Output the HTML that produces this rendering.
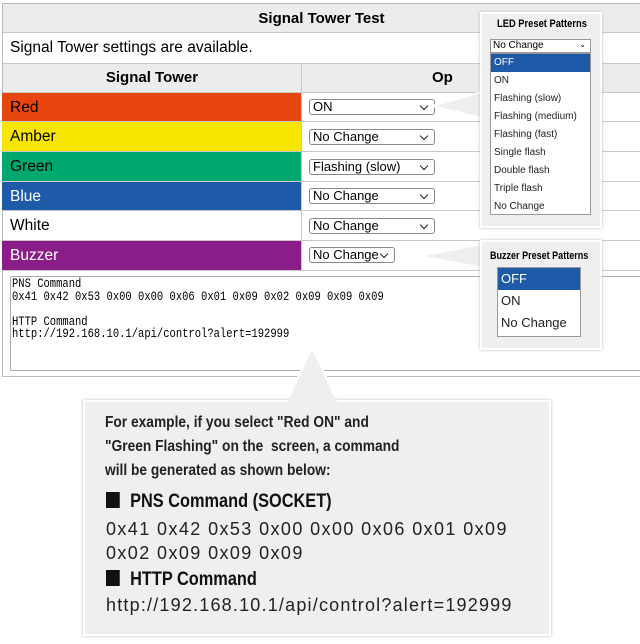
<!DOCTYPE html>
<html><head><style>
*{margin:0;padding:0;box-sizing:border-box}
body{width:640px;height:644px;background:#fff;position:relative;overflow:hidden;font-family:"Liberation Sans",Arial,sans-serif;color:#000}
.a{position:absolute}
.lab{position:absolute;left:2px;width:299px;font-size:15.5px;padding-left:8px;line-height:29px}
.sel{position:absolute;left:309px;width:126px;height:16px;border:1px solid #888;border-radius:3px;background:#fff;font-size:13px;line-height:14px;padding-left:3px;white-space:nowrap}
.sel:after{content:"";position:absolute;right:7px;top:3px;width:5px;height:5px;border-right:1.6px solid #222;border-bottom:1.6px solid #222;transform:rotate(45deg)}
.n{font-weight:bold;white-space:nowrap;transform-origin:left}
.pop{position:absolute;background:#eeefef;border:2px solid #fff;box-shadow:0 0 3px #bbb}
.li{font-size:10px;height:18px;line-height:18px;padding-left:3px;color:#222}
</style></head><body>
<div class="a" style="left:2px;top:3px;width:640px;height:374px;border:1px solid #bbb"></div>
<div class="a" style="left:3px;top:4px;width:637px;height:29px;background:#ececec;border-bottom:1px solid #c8c8c8;text-align:center;font-weight:bold;font-size:15px;line-height:29px">Signal Tower Test</div>
<div class="a" style="left:10px;top:33px;font-size:15.5px;line-height:30px">Signal Tower settings are available.</div>
<div class="a" style="left:3px;top:63px;width:637px;height:30px;background:#ececec;border-top:1px solid #c8c8c8;border-bottom:1px solid #c8c8c8"></div>
<div class="a" style="left:3px;top:63px;width:298px;text-align:center;font-weight:bold;font-size:15px;line-height:30px">Signal Tower</div>
<div class="a" style="left:432px;top:63px;font-weight:bold;font-size:15px;line-height:30px">Op</div>
<div class="a" style="left:301px;top:63px;width:1px;height:208px;background:#c8c8c8"></div>

<div class="lab" style="top:93px;background:#e8460f">Red</div>
<div class="lab" style="top:122px;background:#f7e600;height:29px">Amber</div>
<div class="lab" style="top:152px;background:#00a870">Green</div>
<div class="lab" style="top:182px;background:#1f5aa8;color:#fff">Blue</div>
<div class="lab" style="top:211px">White</div>
<div class="lab" style="top:241px;background:#8a1d87;color:#fff">Buzzer</div>
<div class="a" style="left:2px;top:121px;width:638px;height:1px;background:#c8c8c8"></div>
<div class="a" style="left:2px;top:151px;width:638px;height:1px;background:#c8c8c8"></div>
<div class="a" style="left:2px;top:181px;width:638px;height:1px;background:#c8c8c8"></div>
<div class="a" style="left:2px;top:210px;width:638px;height:1px;background:#c8c8c8"></div>
<div class="a" style="left:2px;top:240px;width:638px;height:1px;background:#c8c8c8"></div>
<div class="a" style="left:2px;top:270px;width:638px;height:1px;background:#c8c8c8"></div>

<div class="sel" style="top:99px">ON</div>
<div class="sel" style="top:129px">No Change</div>
<div class="sel" style="top:159px">Flashing (slow)</div>
<div class="sel" style="top:188px">No Change</div>
<div class="sel" style="top:218px">No Change</div>
<div class="sel" style="top:247px;width:86px">No Change</div>

<div class="a" style="left:10px;top:276px;width:640px;height:95px;border:1px solid #aaa;border-radius:2px"></div>
<div class="a" style="left:12px;top:278px;font-family:'Liberation Mono',monospace;font-size:12.5px;line-height:12.5px;white-space:pre;transform:scaleX(.84);transform-origin:left">PNS Command
0x41 0x42 0x53 0x00 0x00 0x06 0x01 0x09 0x02 0x09 0x09 0x09

HTTP Command
http://192.168.10.1/api/control?alert=192999</div>

<svg class="a" style="left:0;top:0" width="640" height="644">
<polygon points="432,106 482,92 482,118" fill="#eeefef" stroke="#fff" stroke-width="2"/>
<polygon points="420,256 482,244 482,268" fill="#eeefef" stroke="#fff" stroke-width="2"/>
<polygon points="312,347 287,402 338,402" fill="#eeefef" stroke="#fff" stroke-width="2"/>
</svg>

<div class="pop" style="left:480px;top:12px;width:122px;height:216px">
<div class="n" style="position:absolute;left:15px;top:4px;font-size:11px;transform:scaleX(.85)">LED Preset Patterns</div>
<div class="a" style="left:8px;top:25px;width:101px;height:14px;background:#fff;border:1px solid #999;font-size:10px;line-height:12px;padding-left:2px">No Change<span style="position:absolute;right:4px;top:-1px;font-size:8px">&#8964;</span></div>
<div class="a" style="left:8px;top:39px;width:101px;height:162px;background:#fff;border:1px solid #999">
<div class="li" style="background:#1f5aa8;color:#fff">OFF</div>
<div class="li">ON</div><div class="li">Flashing (slow)</div><div class="li">Flashing (medium)</div><div class="li">Flashing (fast)</div><div class="li">Single flash</div><div class="li">Double flash</div><div class="li">Triple flash</div><div class="li">No Change</div>
</div></div>

<div class="pop" style="left:480px;top:240px;width:122px;height:110px">
<div class="n" style="position:absolute;left:8px;top:8px;font-size:11px;transform:scaleX(.82)">Buzzer Preset Patterns</div>
<div class="a" style="left:15px;top:25px;width:84px;height:70px;background:#fff;border:1px solid #999">
<div class="li" style="background:#1f5aa8;color:#fff;font-size:13px;height:22px;line-height:22px">OFF</div>
<div class="li" style="font-size:13px;height:22px;line-height:22px">ON</div>
<div class="li" style="font-size:13px;height:22px;line-height:22px">No Change</div>
</div></div>

<div class="a" style="left:83px;top:400px;width:468px;height:236px;background:#eeefef;border:2px solid #fff;box-shadow:0 0 3px #bbb"></div>
<div class="a" style="left:288px;top:398px;width:49px;height:5px;background:#eeefef"></div>
<div class="a n" style="left:105px;top:411px;font-size:16px;line-height:24px;color:#222;transform:scaleX(.86)">For example, if you select "Red ON" and<br>"Green Flashing" on the&nbsp; screen, a command<br>will be generated as shown below:</div>
<div class="a n" style="left:106px;top:491px;font-size:19px;color:#111;transform:scaleX(.86)"><span style="display:inline-block;width:16px;height:16px;background:#111;margin-right:12px;vertical-align:-1px"></span>PNS Command (SOCKET)</div>
<div class="a" style="left:106px;top:517px;font-size:18px;line-height:24px;letter-spacing:1.4px;color:#222;white-space:nowrap">0x41 0x42 0x53 0x00 0x00 0x06 0x01 0x09<br>0x02 0x09 0x09 0x09</div>
<div class="a n" style="left:106px;top:569px;font-size:19px;color:#111;transform:scaleX(.86)"><span style="display:inline-block;width:16px;height:16px;background:#111;margin-right:12px;vertical-align:-1px"></span>HTTP Command</div>
<div class="a" style="left:106px;top:595px;font-size:18px;letter-spacing:1.2px;color:#222;white-space:nowrap">http://192.168.10.1/api/control?alert=192999</div>
</body></html>
